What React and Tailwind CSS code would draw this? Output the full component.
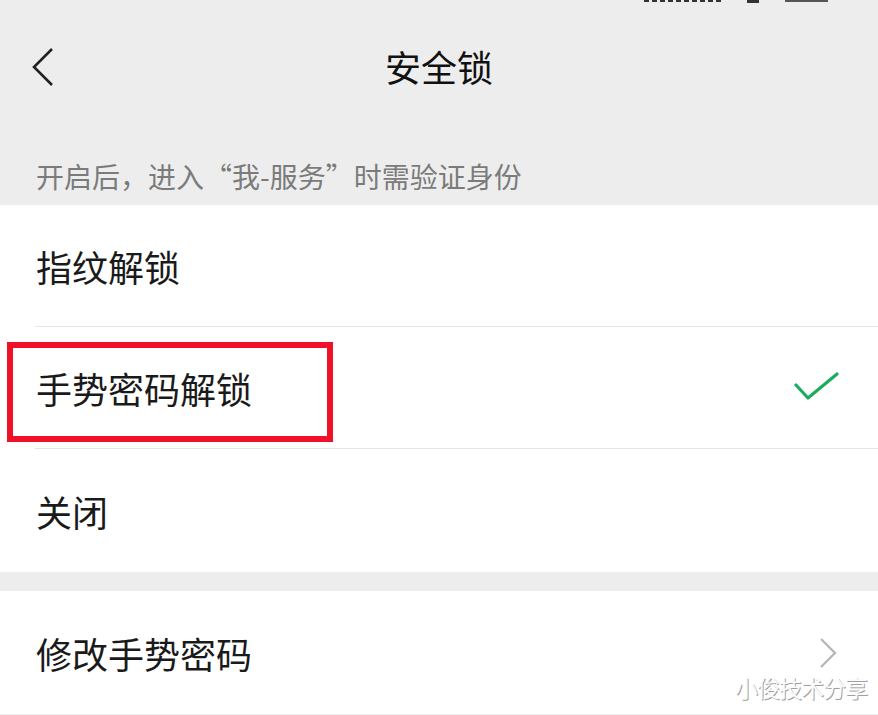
import React from "react";

const font = { fontFamily: '"Noto Sans CJK SC", "Noto Sans", sans-serif' };

const Row = ({ label, children, divider }) => (
  <div className="relative">
    <div className="h-[121px] flex items-center justify-between pl-[36px] pr-[40px]">
      <span className="text-[36px] leading-none text-[#1a1a1a]">{label}</span>
      {children}
    </div>
    {divider && <div className="ml-[35px] h-px bg-[#e5e5e5]" />}
  </div>
);

const Check = () => (
  <svg width="46" height="32" viewBox="0 0 46 32" className="mr-[-2px]">
    <polyline points="2,13 14,26 43,2" fill="none" stroke="#1aad5e" strokeWidth="3.2" strokeLinecap="round" strokeLinejoin="round" />
  </svg>
);

const ChevronRight = () => (
  <svg width="20" height="32" viewBox="0 0 20 32">
    <polyline points="3,2 17,16 3,30" fill="none" stroke="#b5b5b5" strokeWidth="2.2" />
  </svg>
);

export default function App() {
  return (
    <div className="w-[878px] h-[715px] bg-[#ededed] relative overflow-hidden" style={font}>
      {/* clipped status bar */}
      <div className="h-[4px] flex items-start justify-end pr-[50px] gap-[26px]">
        <div className="flex gap-[3px] mt-[-1px]">
          {[0, 1, 2, 3, 4, 5, 6, 7, 8, 9].map((i) => (
            <div key={i} className="w-[5px] h-[3px] bg-[#333]" />
          ))}
        </div>
        <div className="w-[12px] h-[4px] bg-[#333] mt-[-1px]" />
        <div className="w-[43px] h-[2px] bg-[#555]" />
      </div>

      {/* nav bar */}
      <div className="h-[128px] flex items-center relative">
        <div className="pl-[31px] mt-[-2px]">
          <svg width="24" height="40" viewBox="0 0 24 40">
            <polyline points="21,2 3,20 21,38" fill="none" stroke="#222" strokeWidth="2.6" />
          </svg>
        </div>
        <div className="absolute inset-0 flex items-center justify-center pb-[4px]">
          <span className="text-[36px] leading-none text-[#111]">安全锁</span>
        </div>
      </div>

      {/* hint */}
      <div className="h-[73px] flex items-end pb-[15px] pl-[36px]">
        <span className="text-[28px] leading-none text-[#7b7b7b]">开启后，进入“我-服务”时需验证身份</span>
      </div>

      {/* options */}
      <div className="bg-white">
        <Row label="指纹解锁" divider />
        <div className="relative">
          <Row label="手势密码解锁" divider>
            <Check />
          </Row>
          <div className="absolute left-[7px] top-[15px] w-[326px] h-[100px] border-[6px] border-[#f01028]" />
        </div>
        <div className="h-[123px] flex items-center pl-[36px]">
          <span className="text-[36px] leading-none text-[#1a1a1a]">关闭</span>
        </div>
      </div>

      <div className="h-[19px]" />

      <div className="bg-white h-[123px] flex items-center justify-between pl-[36px] pr-[40px]">
        <span className="text-[36px] leading-none text-[#1a1a1a]">修改手势密码</span>
        <ChevronRight />
      </div>

      {/* watermark */}
      <div
        className="absolute left-[735px] top-[676px] text-[23px] leading-none text-[#fbfbfb] tracking-[-1px]"
        style={{ textShadow: "1px 1px 0 #a0a0a0" }}
      >
        小俊技术分享
      </div>
    </div>
  );
}
